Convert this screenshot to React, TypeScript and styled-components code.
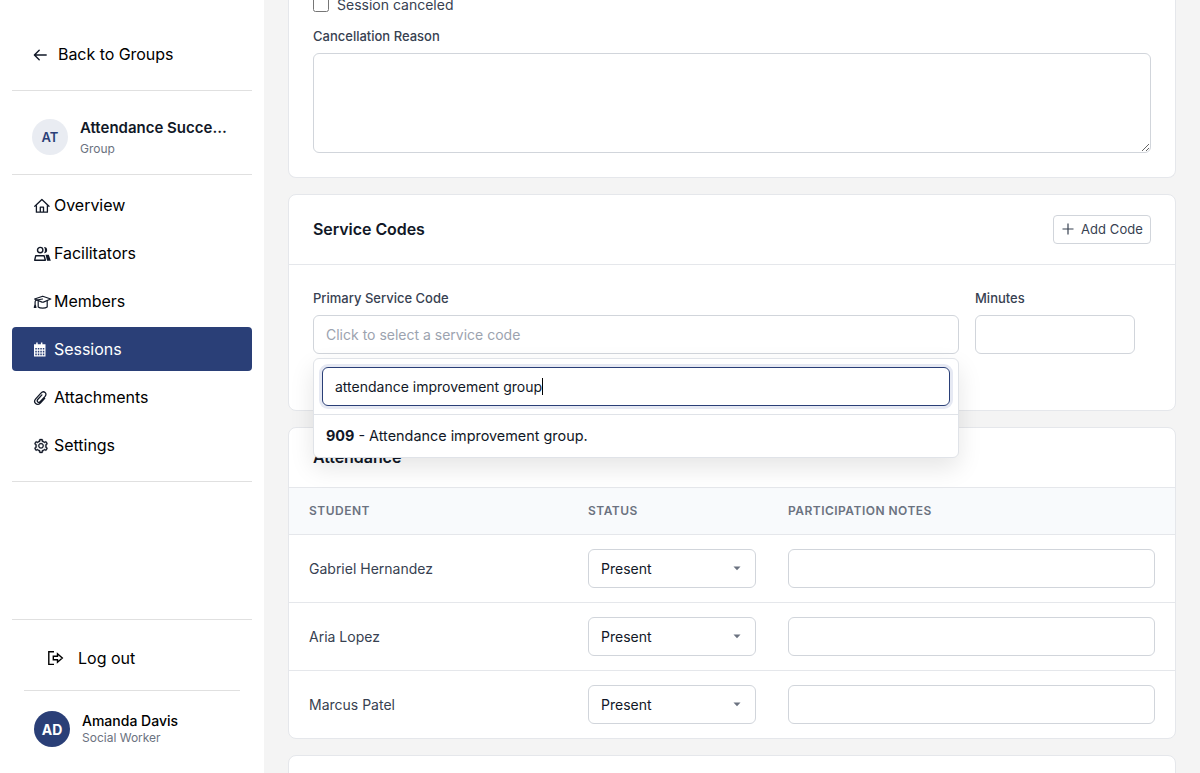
import React from 'react';
import styled, { createGlobalStyle, css } from 'styled-components';
import { AiOutlineSetting } from 'react-icons/ai';

const GlobalStyle = createGlobalStyle`
  *, *::before, *::after { box-sizing: border-box; }
  html, body { margin: 0; height: 100%; overflow: hidden; }
  body { background: #f4f4f4; font-family: Inter, sans-serif; font-size: 16px; color: #000; }
  button, input, textarea { font-family: inherit; }
`;

const Page = styled.div`
  display: flex;
  height: 773px;
  overflow: hidden;
`;

const Sidebar = styled.aside`
  display: flex;
  flex-direction: column;
  width: 264px;
  flex-shrink: 0;
  padding: 0 12px;
  background: #fff;
`;

const BackLink = styled.a`
  display: flex;
  align-items: center;
  gap: 10px;
  height: 91px;
  padding: 18px 0 0 20px;
  border-bottom: 1px solid #e0e0e0;
  letter-spacing: -0.05px;
  svg { color: #111827; margin-top: 1px; }
`;

const GroupHeader = styled.div`
  display: flex;
  align-items: center;
  gap: 12px;
  height: 84px;
  padding: 8px 20px 0;
  border-bottom: 1px solid #e0e0e0;
`;

const Avatar = styled.div<{ $solid?: boolean }>`
  display: flex;
  align-items: center;
  justify-content: center;
  width: 36px;
  height: 36px;
  flex-shrink: 0;
  border-radius: 50%;
  font-size: ${p => (p.$solid ? 14 : 13)}px;
  font-weight: ${p => (p.$solid ? 700 : 600)};
  color: ${p => (p.$solid ? '#fff' : '#2a3f77')};
  background: ${p => (p.$solid ? '#2a3f77' : '#e9ecf2')};
`;

const GroupText = styled.div`
  min-width: 0;
  padding-top: 2px;
`;

const GroupName = styled.div`
  overflow: hidden;
  text-overflow: ellipsis;
  white-space: nowrap;
  font-size: 15px;
  font-weight: 600;
  line-height: 20px;
  color: #111827;
`;

const GroupKind = styled.div`
  margin-top: 2px;
  font-size: 12px;
  line-height: 18px;
  color: #6b7280;
`;

const Nav = styled.nav`
  display: flex;
  flex-direction: column;
  gap: 4px;
  height: 307px;
  padding-top: 8px;
  border-bottom: 1px solid #e0e0e0;
`;

const NavItem = styled.a<{ $active?: boolean }>`
  display: flex;
  align-items: center;
  gap: 1px;
  height: 44px;
  padding-left: 21px;
  border-radius: 4px;
  letter-spacing: -0.03px;
  ${p => p.$active && css`
    color: #fff;
    background: #2a3f77;
  `}
`;

const NavIcon = styled.span<{ $active?: boolean }>`
  display: flex;
  width: 20px;
  padding-top: 1px;
  color: ${p => (p.$active ? '#fff' : '#111827')};
  svg { flex-shrink: 0; }
`;

const SidebarFooter = styled.div`
  margin-top: auto;
  height: 154px;
  padding: 0 12px;
  border-top: 1px solid #e0e0e0;
`;

const Logout = styled.a`
  display: flex;
  align-items: center;
  gap: 12px;
  height: 71px;
  padding: 6px 0 0 22px;
  border-bottom: 1px solid #e0e0e0;
`;

const Profile = styled.div`
  display: flex;
  align-items: center;
  gap: 12px;
  height: 76px;
  padding-left: 10px;
`;

const ProfileName = styled.div`
  font-size: 14px;
  font-weight: 500;
  line-height: 17px;
`;

const ProfileRole = styled.div`
  font-size: 12px;
  line-height: 17px;
  color: #6b7280;
`;

const Main = styled.main`
  display: flex;
  flex: 1;
  flex-direction: column;
  gap: 16px;
  min-width: 0;
  padding: 0 24px;
`;

const Card = styled.section<{ $height: number; $continued?: boolean }>`
  flex-shrink: 0;
  height: ${p => p.$height}px;
  border: 1px solid #e5e7eb;
  border-top-width: ${p => (p.$continued ? 0 : 1)}px;
  border-radius: ${p => (p.$continued ? '0 0 8px 8px' : '8px')};
  background: #fff;
`;

const CancelForm = styled.div`
  display: flex;
  flex-direction: column;
  padding: 0 24px;
`;

const CheckLabel = styled.label`
  display: flex;
  align-items: center;
  gap: 8px;
  height: 20px;
  margin-top: -5px;
  padding-bottom: 1px;
  font-size: 14px;
  color: #374151;
`;

const CheckBox = styled.span`
  width: 16px;
  height: 16px;
  margin-bottom: 1px;
  border: 1px solid #767676;
  border-radius: 2.5px;
  background: #fff;
`;

const Label = styled.label`
  display: block;
  height: 17px;
  font-size: 13px;
  font-weight: 500;
  line-height: 17px;
  color: #374151;
`;

const controlBorder = css`
  border: 1px solid #d1d5db;
  border-radius: 6px;
  background: #fff;
`;

const ReasonLabel = styled(Label)`
  margin: 13px 0 8px;
`;

const Reason = styled.textarea`
  ${controlBorder}
  display: block;
  width: 100%;
  height: 100px;
  resize: vertical;
  outline: none;
`;

const CardHeader = styled.header<{ $height: number }>`
  display: flex;
  align-items: center;
  justify-content: space-between;
  height: ${p => p.$height}px;
  padding: 0 24px;
  border-bottom: 1px solid #e5e7eb;
`;

const CardTitle = styled.h2`
  margin: 0;
  padding-bottom: 2px;
  font-size: 16px;
  font-weight: 600;
  letter-spacing: -0.06px;
  color: #111827;
`;

const AddButton = styled.button`
  display: flex;
  align-items: center;
  gap: 6px;
  width: 98px;
  height: 29px;
  padding: 0 0 1px 7px;
  border: 1px solid #d1d5db;
  border-radius: 4px;
  background: #fff;
  font-size: 13px;
  letter-spacing: 0.07px;
  white-space: nowrap;
  color: #374151;
  svg { flex-shrink: 0; }
`;

const CodeRow = styled.div`
  display: grid;
  grid-template-columns: 646px 160px;
  column-gap: 16px;
  padding: 25px 24px 0;
`;

const Field = styled.div`
  display: flex;
  flex-direction: column;
  gap: 8px;
  position: relative;
`;

const TextBox = styled.div`
  ${controlBorder}
  display: flex;
  align-items: center;
  height: 39px;
  padding: 0 12px;
  font-size: 14px;
  color: #9ca3af;
`;

const Dropdown = styled.div`
  position: absolute;
  top: 68px;
  left: 0;
  right: 0;
  z-index: 2;
  height: 100px;
  border: 1px solid #e0e3e8;
  border-radius: 6px;
  background: #fff;
  box-shadow: 0 10px 25px rgba(0, 0, 0, 0.1);
`;

const SearchArea = styled.div`
  height: 56px;
  padding: 8px;
  border-bottom: 1px solid #e0e3e8;
`;

const SearchBox = styled.div`
  display: flex;
  align-items: center;
  height: 39px;
  padding: 0 12px;
  border: 1px solid #2a3f77;
  border-radius: 6px;
  box-shadow: 0 0 0 3px #e6e9f3;
  font-size: 14px;
  color: #111827;
`;

const Caret = styled.span`
  width: 1px;
  height: 17px;
  background: #000;
`;

const Option = styled.div`
  height: 42px;
  padding: 0 12px;
  font-size: 14.4px;
  line-height: 42px;
  color: #111827;
  b { font-weight: 700; }
`;

const rowGrid = css`
  display: grid;
  grid-template-columns: 279px 200px 1fr;
  align-items: center;
  padding: 0 20px;
`;

const TableHead = styled.div`
  ${rowGrid}
  height: 47px;
  padding-bottom: 1px;
  border-bottom: 1px solid #e5e7eb;
  background: #f8fafc;
  font-size: 12px;
  font-weight: 600;
  letter-spacing: 0.48px;
  color: #6b7280;
`;

const StudentRow = styled.div`
  ${rowGrid}
  height: 68px;
  border-bottom: 1px solid #e5e7eb;
  font-size: 14px;
  color: #374151;
  &:last-child { height: 67px; border-bottom: 0; }
`;

const StatusSelect = styled.div`
  ${controlBorder}
  display: flex;
  align-items: center;
  justify-content: space-between;
  width: 168px;
  height: 39px;
  padding: 0 14px 0 12px;
  color: #111827;
`;

const students = ['Gabriel Hernandez', 'Aria Lopez', 'Marcus Patel'];

const ArrowLeftIcon = () => (
  <svg width="16" height="16" viewBox="0 0 16 16" fill="none" stroke="currentColor" strokeWidth="1.4" strokeLinecap="round" strokeLinejoin="round">
    <path d="M14.200 8H2.600M7.200 3.200 2.400 8l4.800 4.800" />
  </svg>
);

const PlusIcon = () => (
  <svg width="14" height="14" viewBox="0 0 14 14" fill="none" stroke="currentColor" strokeWidth="1.200">
    <path d="M7 1.500v11M1.500 7h11" />
  </svg>
);

const HomeIcon = () => (
  <svg width="18" height="18" viewBox="0 0 18 18" fill="none" stroke="currentColor" strokeWidth="1.300" strokeLinejoin="round">
    <path d="M1.800 9.300 8.900 2.500 16 9.300" strokeLinecap="round" />
    <path d="M3.400 8.300v6.900h11V8.300M7.300 15.200v-5h3.200v5" />
  </svg>
);

const UsersIcon = () => (
  <svg width="18" height="18" viewBox="0 0 18 18" fill="none" stroke="currentColor" strokeWidth="1.400" strokeLinejoin="round">
    <circle cx="7.200" cy="5.100" r="2.700" />
    <path d="M1.700 15.200 2.700 10.800h8.400l1.300 4.400z" />
    <path d="M11 1.900a3.100 3.100 0 1 1 0 6.300c1.300-1.900 1.300-4.400 0-6.300zM12.500 9.700h3.300l2 6h-3.700z" fill="currentColor" stroke="none" />
  </svg>
);

const GraduationIcon = () => (
  <svg width="19" height="18" viewBox="0 0 19 18" fill="none" stroke="currentColor" strokeWidth="1.200" strokeLinejoin="round" strokeLinecap="round">
    <path d="M1.600 6 9.700 3.200 17.800 6l-7.400 3.100c-.5.2-.9.200-1.400 0z" />
    <path d="M5.200 8v6c2 1.500 7 1.500 9 0V8" />
    <path d="M9.500 6 4 7c-1.300.3-1.900.8-1.900 1.700v3.100M2.100 11.500l-.8 3h1.600z" />
  </svg>
);

const CalendarIcon = () => (
  <svg width="14" height="18" viewBox="0 0 14 18" fill="currentColor">
    <path d="M3.200 1.500h1.500v3H3.200zM7.900 1.500h1.500v3H7.900z" />
    <path
      fillRule="evenodd"
      d="M1 3.300h11.500v12.200H1zM2.300 6.900v1.700h1.500V6.900zM4.800 6.900v1.700h1.500V6.900zM7.300 6.900v1.700h1.500V6.900zM9.800 6.900v1.700h1.500V6.900zM2.300 9.700v1.700h1.500V9.700zM4.800 9.700v1.700h1.500V9.700zM7.300 9.700v1.700h1.500V9.700zM9.800 9.700v1.700h1.500V9.700zM2.300 12.500v1.700h1.500v-1.700zM4.800 12.500v1.700h1.500v-1.700zM7.300 12.500v1.700h1.500v-1.700zM9.800 12.500v1.700h1.500v-1.700z"
    />
  </svg>
);

const ClipIcon = () => (
  <svg width="15" height="16" viewBox="0 0 15 16" fill="none" stroke="currentColor" strokeWidth="1.300" strokeLinecap="round">
    <path d="M11.700 8.400 7.400 13c-3.400 3.400-7.700-.5-4.700-4.100l5.200-5.800c2.900-3.100 6.800.2 4.200 3.300l-4.700 5.100c-1.800 1.900-4.300 0-2.700-2l4.200-4.600" />
  </svg>
);

const LogoutIcon = () => (
  <svg width="20" height="18" viewBox="0 0 20 18" fill="none" stroke="currentColor" strokeWidth="1.400">
    <path d="M8 2.700H2.800v12.700H8" />
    <path d="M7.300 7.300h4.200V4.800L16.300 9l-4.800 4.200v-2.500H7.300z" />
  </svg>
);

const CaretDown = () => (
  <svg width="8" height="5" viewBox="0 0 8 5"><path d="M.5.5h7L4 4.300z" fill="#6b7280" /></svg>
);

const navItems = [
  { label: 'Overview', icon: <HomeIcon /> },
  { label: 'Facilitators', icon: <UsersIcon /> },
  { label: 'Members', icon: <GraduationIcon /> },
  { label: 'Sessions', icon: <CalendarIcon />, active: true },
  { label: 'Attachments', icon: <ClipIcon /> },
  { label: 'Settings', icon: <AiOutlineSetting size={16} stroke="currentColor" strokeWidth={22} /> },
];

export default function App() {
  return (
    <Page>
      <GlobalStyle />
      <Sidebar>
        <BackLink><ArrowLeftIcon />Back to Groups</BackLink>
        <GroupHeader>
          <Avatar>AT</Avatar>
          <GroupText>
            <GroupName>Attendance Success Group</GroupName>
            <GroupKind>Group</GroupKind>
          </GroupText>
        </GroupHeader>
        <Nav>
          {navItems.map(n => (
            <NavItem key={n.label} $active={n.active}>
              <NavIcon $active={n.active}>{n.icon}</NavIcon>{n.label}
            </NavItem>
          ))}
        </Nav>
        <SidebarFooter>
          <Logout><LogoutIcon />Log out</Logout>
          <Profile>
            <Avatar $solid>AD</Avatar>
            <div>
              <ProfileName>Amanda Davis</ProfileName>
              <ProfileRole>Social Worker</ProfileRole>
            </div>
          </Profile>
        </SidebarFooter>
      </Sidebar>
      <Main>
        <Card $height={178} $continued>
          <CancelForm>
            <CheckLabel><CheckBox />Session canceled</CheckLabel>
            <ReasonLabel>Cancellation Reason</ReasonLabel>
            <Reason />
          </CancelForm>
        </Card>
        <Card $height={217}>
          <CardHeader $height={70}>
            <CardTitle>Service Codes</CardTitle>
            <AddButton><PlusIcon />Add Code</AddButton>
          </CardHeader>
          <CodeRow>
            <Field>
              <Label>Primary Service Code</Label>
              <TextBox>Click to select a service code</TextBox>
              <Dropdown>
                <SearchArea><SearchBox>attendance improvement group<Caret /></SearchBox></SearchArea>
                <Option><b>909</b> - Attendance improvement group.</Option>
              </Dropdown>
            </Field>
            <Field>
              <Label>Minutes</Label>
              <TextBox />
            </Field>
          </CodeRow>
        </Card>
        <Card $height={312}>
          <CardHeader $height={60}><CardTitle>Attendance</CardTitle></CardHeader>
          <TableHead><span>STUDENT</span><span>STATUS</span><span>PARTICIPATION NOTES</span></TableHead>
          {students.map(name => (
            <StudentRow key={name}>
              <span>{name}</span>
              <StatusSelect>Present<CaretDown /></StatusSelect>
              <TextBox />
            </StudentRow>
          ))}
        </Card>
        <Card $height={120} />
      </Main>
    </Page>
  );
}
